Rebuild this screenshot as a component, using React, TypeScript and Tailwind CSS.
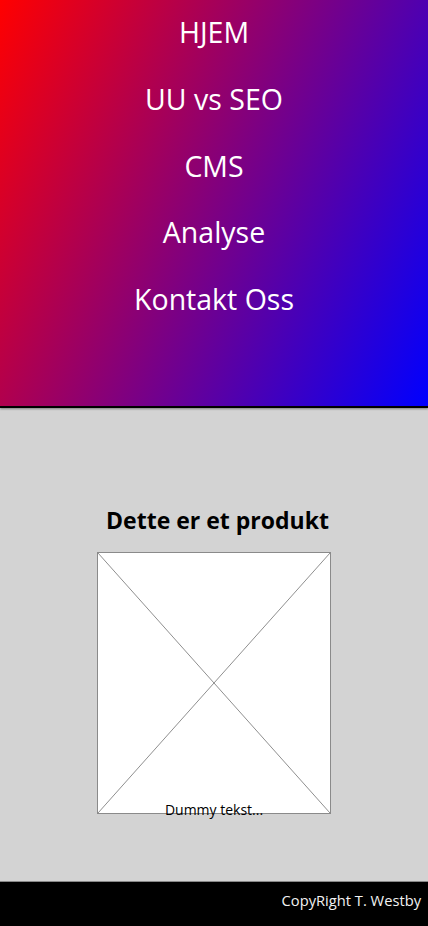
import React from 'react';

const links = ['HJEM', 'UU vs SEO', 'CMS', 'Analyse', 'Kontakt Oss'];

function Placeholder() {
  return (
    <div className="w-[234px] h-[262px] bg-white border border-[#8a8a8a]">
      <svg width="100%" height="100%" viewBox="0 0 232 260" preserveAspectRatio="none" className="block">
        <line x1="0" y1="0" x2="232" y2="260" stroke="#8f8f8f" strokeWidth="1" />
        <line x1="232" y1="0" x2="0" y2="260" stroke="#8f8f8f" strokeWidth="1" />
      </svg>
    </div>
  );
}

export default function App() {
  return (
    <div className="min-h-[926px] flex flex-col bg-[#d3d3d3] font-['Open_Sans','Noto_Sans',sans-serif]">
      <header className="h-[408px] bg-[linear-gradient(115deg,#ff0000,#0000ff)] border-b-2 border-black shadow-[0_1px_2px_rgba(0,0,0,0.4)]">
        <nav className="-mt-[1px] flex flex-col items-center">
          {links.map((l) => (
            <a key={l} href="#" className="h-[66.75px] flex items-center text-white text-[28.5px] leading-none">
              {l}
            </a>
          ))}
        </nav>
      </header>

      <main className="h-[473px] flex flex-col items-center pt-[97px]">
        <h2 className="ml-[7px] text-[23px] leading-[30px] font-bold text-black">Dette er et produkt</h2>
        <div className="mt-[17px] flex flex-col items-center">
          <Placeholder />
          <p className="-mt-[13px] text-[14px] leading-[18px] text-black">Dummy tekst...</p>
        </div>
      </main>

      <footer className="h-[45px] bg-black border-t border-[#888] flex justify-end pr-[7px] pt-[8px]">
        <span className="text-[14.7px] leading-[20px] text-[#f2f2f2]">CopyRight T. Westby</span>
      </footer>
    </div>
  );
}
